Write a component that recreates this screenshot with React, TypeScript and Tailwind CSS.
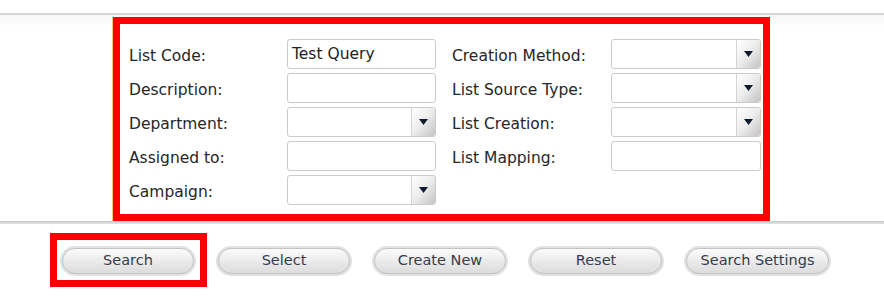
import React from 'react';

const FONT = "font-['DejaVu_Sans',Tahoma,sans-serif]";

function TextBox({ value = '', width = 'w-[149px]' }: { value?: string; width?: string }) {
  return (
    <div className={`${width} h-[30px] rounded-[3px] border-[1.5px] border-[#cbcbcb] bg-white flex items-center px-[4px] pt-[2px] text-[15.5px] text-[#222]`}>
      {value}
    </div>
  );
}

function SelectBox({ width = 'w-[149px]' }: { width?: string }) {
  return (
    <div className={`${width} h-[30px] rounded-[3px] border-[1.5px] border-[#cbcbcb] bg-white flex justify-end overflow-hidden`}>
      <div className="w-[24px] h-full border-l border-[#d4d4d4] bg-gradient-to-br from-[#ffffff] via-[#ececec] to-[#c4c4c4] flex items-center justify-center rounded-r-[2px]">
        <svg width="9" height="6" viewBox="0 0 9 6">
          <path d="M0 0 H9 L4.5 6 Z" fill="#0d1a2e" />
        </svg>
      </div>
    </div>
  );
}

function PillButton({ label, width = 'w-[136px]' }: { label: string; width?: string }) {
  return (
    <div className={`${width} h-[30px] rounded-full bg-[#e2e2e2] p-[2px]`}>
      <button className="w-full h-full rounded-full border border-[#c4c4c4] bg-gradient-to-b from-[#fbfbfb] to-[#dcdcdc] text-[14.5px] text-[#353c4c] flex items-center justify-center pb-[1px]">
        {label}
      </button>
    </div>
  );
}

export default function App() {
  const label = 'h-[30px] flex items-center text-[15.5px] text-[#262626] pt-[5px]';

  return (
    <div className={`w-[884px] h-[300px] bg-white ${FONT}`}>
      <div className="h-[13px]" />
      <div className="h-[2px] bg-[#d6d6d6]" />

      {/* query form panel */}
      <div className="bg-[linear-gradient(#f6f6f6,#ffffff_12px)] pt-[2px]">
        <div className="ml-[112px] w-[658px] border-l border-[#f3c878]">
          <div className="h-[204px] border-[7px] border-[#ff0000] bg-white pl-[9px] pt-[15px]">
            <div className="grid grid-cols-[158px_149px_175px_150px] auto-rows-[30px] gap-y-[4px]">
              <div className={label}>List Code:</div>
              <TextBox value="Test Query" />
              <div className={`${label} pl-[16px]`}>Creation Method:</div>
              <SelectBox width="w-[150px]" />

              <div className={label}>Description:</div>
              <TextBox />
              <div className={`${label} pl-[16px]`}>List Source Type:</div>
              <SelectBox width="w-[150px]" />

              <div className={label}>Department:</div>
              <SelectBox />
              <div className={`${label} pl-[16px]`}>List Creation:</div>
              <SelectBox width="w-[150px]" />

              <div className={label}>Assigned to:</div>
              <TextBox />
              <div className={`${label} pl-[16px]`}>List Mapping:</div>
              <TextBox width="w-[150px]" />

              <div className={label}>Campaign:</div>
              <SelectBox />
            </div>
          </div>
        </div>
      </div>

      <div className="h-[3px] bg-gradient-to-b from-[#c9c9c9] to-[#e4e4e4]" />

      {/* action buttons */}
      <div className="flex items-center pl-[50px] pt-[9px]">
        <div className="border-[7px] border-[#ff0000] pl-[3px] pr-[4px] pt-[6px] pb-[4px]">
          <PillButton label="Search" />
        </div>
        <div className="flex items-center gap-[20px] ml-[9px] pt-[2px]">
          <PillButton label="Select" />
          <PillButton label="Create New" />
          <PillButton label="Reset" />
          <PillButton label="Search Settings" width="w-[147px]" />
        </div>
      </div>
    </div>
  );
}
